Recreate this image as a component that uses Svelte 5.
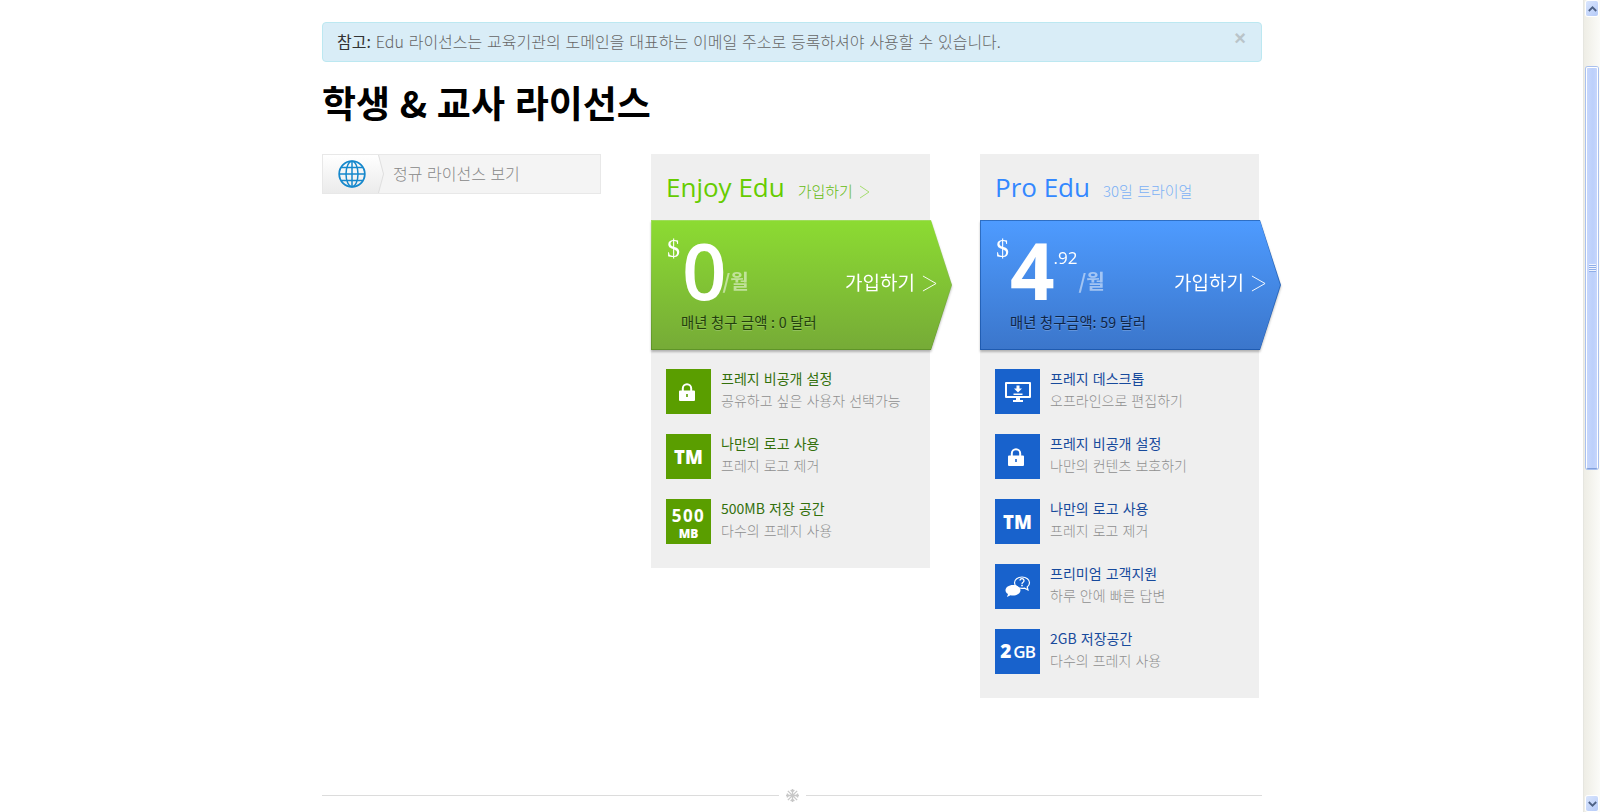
<script>
  const plans = [
    {
      id: 'enjoy',
      name: 'Enjoy Edu',
      tagline: '가입하기',
      taglineArrow: true,
      whole: '0',
      cents: '',
      billing: '매년 청구 금액 : 0 달러',
      features: [
        { icon: 'lock', title: '프레지 비공개 설정', sub: '공유하고 싶은 사용자 선택가능' },
        { icon: 'tm', title: '나만의 로고 사용', sub: '프레지 로고 제거' },
        { icon: '500', title: '500MB 저장 공간', sub: '다수의 프레지 사용' }
      ]
    },
    {
      id: 'pro',
      name: 'Pro Edu',
      tagline: '30일 트라이얼',
      taglineArrow: false,
      whole: '4',
      cents: '.92',
      billing: '매년 청구금액: 59 달러',
      features: [
        { icon: 'desktop', title: '프레지 데스크톱', sub: '오프라인으로 편집하기' },
        { icon: 'lock', title: '프레지 비공개 설정', sub: '나만의 컨텐츠 보호하기' },
        { icon: 'tm', title: '나만의 로고 사용', sub: '프레지 로고 제거' },
        { icon: 'chat', title: '프리미엄 고객지원', sub: '하루 안에 빠른 답변' },
        { icon: '2gb', title: '2GB 저장공간', sub: '다수의 프레지 사용' }
      ]
    }
  ];
</script>

{#snippet featureIcon(kind)}
  {#if kind === 'lock'}
    <svg class="lock" width="16" height="18" viewBox="0 0 16 18">
      <path d="M3.800 8V5.500a4.200 4.200 0 0 1 8.400 0V8" fill="none" stroke="#fff" stroke-width="2" />
      <path fill="#fff" fill-rule="evenodd" d="M1 7.500h14a1 1 0 0 1 1 1V17a1 1 0 0 1-1 1H1a1 1 0 0 1-1-1V8.500a1 1 0 0 1 1-1zM7.200 11v3h1.600v-3z" />
    </svg>
  {:else if kind === 'tm'}
    <span class="tm">TM</span>
  {:else if kind === '500'}
    <span class="stack"><span class="n500">500</span><span class="mb">MB</span></span>
  {:else if kind === '2gb'}
    <span class="two"><b>2</b><span>GB</span></span>
  {:else if kind === 'desktop'}
    <svg width="26" height="22" viewBox="0 0 26 22">
      <path fill="#fff" fill-rule="evenodd" d="M1 1h24a1 1 0 0 1 1 1v14a1 1 0 0 1-1 1H1a1 1 0 0 1-1-1V2a1 1 0 0 1 1-1zM2 3v12h22V3z" />
      <path fill="#fff" d="M11.500 4.500h3v3h2.500l-4 4-4-4h2.500zM8.500 12.500h9V14h-9zM11 17h4v2h3v2H8v-2h3z" />
    </svg>
  {:else if kind === 'chat'}
    <svg width="26" height="22" viewBox="0 0 26 22">
      <path fill="#fff" d="M8 9c4.200 0 7.500 2.300 7.500 5.200S12.200 19.500 8 19.500c-.9 0-1.700-.1-2.500-.3L2 21l1-3.100C1.200 17 .500 15.700.500 14.200.500 11.300 3.800 9 8 9z" />
      <path fill="none" stroke="#fff" stroke-width="1.200" d="M17 1c4.300 0 7.500 2.500 7.500 5.700 0 1.700-.9 3.200-2.300 4.200l.8 2.900-3.600-1.700c-.8.200-1.600.3-2.400.3-4.300 0-7.500-2.500-7.500-5.700S12.700 1 17 1z" />
      <path fill="none" stroke="#fff" stroke-width="1.300" d="M15 4.600a2 2 0 1 1 3.100 1.700c-.8.500-1.100.9-1.100 1.700" />
      <path fill="#fff" d="M16.200 8.800h1.600v1.500h-1.600z" />
    </svg>
  {/if}
{/snippet}

<div class="page">
  <main>
    <div class="alert">
      <p><strong>참고:</strong> Edu 라이선스는 교육기관의 도메인을 대표하는 이메일 주소로 등록하셔야 사용할 수 있습니다.</p>
      <span class="close">×</span>
    </div>

    <h1>학생 &amp; 교사 라이선스</h1>

    <div class="columns">
      <aside class="regular">
        <span class="globe-wrap">
          <span class="globe">
            <svg width="28" height="28" viewBox="0 0 28 28" fill="none" stroke="#1688cc" stroke-width="1.500">
              <circle cx="14" cy="14" r="12.800" stroke-width="1.800" />
              <ellipse cx="14" cy="14" rx="6" ry="12.800" />
              <path d="M14 1v26M1.200 14h25.600M3.200 7.500h21.600M3.200 20.500h21.600" />
            </svg>
          </span>
        </span>
        <span class="regular-label">정규 라이선스 보기</span>
      </aside>

      {#each plans as plan (plan.id)}
        <section class="plan {plan.id}">
          <header>
            <h2>{plan.name}</h2>
            <span class="tagline">{plan.tagline}{#if plan.taglineArrow}<svg class="chev small" viewBox="0 0 11 14"><path d="M1 1l9 6-9 6" /></svg>{/if}</span>
          </header>

          <div class="ribbon-wrap">
            <div class="ribbon-edge">
              <div class="ribbon">
                <div class="price-row">
                  <span class="dollar">$</span>
                  <span class="whole">{plan.whole}</span>
                  {#if plan.cents}<span class="cents">{plan.cents}</span>{/if}
                  <span class="per">/월</span>
                  <span class="cta">가입하기<svg class="chev" viewBox="0 0 16 18"><path d="M1 1l14 8-14 8" /></svg></span>
                </div>
                <div class="billing">{plan.billing}</div>
              </div>
            </div>
          </div>

          <ul>
            {#each plan.features as f}
              <li>
                <span class="icon">{@render featureIcon(f.icon)}</span>
                <div class="feature-text">
                  <div class="feature-title">{f.title}</div>
                  <div class="feature-sub">{f.sub}</div>
                </div>
              </li>
            {/each}
          </ul>
        </section>
      {/each}
    </div>

    <div class="divider">
      <span class="rule"></span>
      <svg width="13" height="13" viewBox="0 0 14 14" stroke="#c8c8c8" stroke-width="1.400" fill="none">
        <path d="M7 0v14M0 7h14M2 2l10 10M12 2L2 12M5 1l2 2 2-2M5 13l2-2 2 2M1 5l2 2-2 2M13 5l-2 2 2 2" />
      </svg>
      <span class="rule"></span>
    </div>
  </main>

  <div class="scrollbar">
    <span class="sb-btn">
      <svg width="9" height="6" viewBox="0 0 9 6"><path d="M.8 5L4.500 1.300 8.200 5" fill="none" stroke="#4d6185" stroke-width="1.800" /></svg>
    </span>
    <span class="sb-track-top"></span>
    <span class="sb-thumb">
      <span class="grip"></span>
    </span>
    <span class="sb-track-bottom"></span>
    <span class="sb-btn">
      <svg width="9" height="6" viewBox="0 0 9 6"><path d="M.8 1L4.500 4.700 8.200 1" fill="none" stroke="#4d6185" stroke-width="1.800" /></svg>
    </span>
  </div>
</div>

<style>
  :global(body) {
    margin: 0;
    background: #fff;
    font-family: "Noto Sans CJK KR", "Open Sans", sans-serif;
  }

  .page {
    display: flex;
    height: 812px;
    overflow: hidden;
  }

  main {
    flex: 1;
    padding: 22px 0 0 322px;
    min-width: 0;
  }

  /* notice */
  .alert {
    box-sizing: border-box;
    width: 940px;
    height: 40px;
    display: flex;
    justify-content: space-between;
    padding: 0 15px 0 14px;
    background: #d9edf7;
    border: 1px solid #bce8f1;
    border-radius: 4px;
    color: #666;
    font-size: 16px;
    font-weight: 300;
    line-height: 37px;
    word-spacing: 1.300px;
  }

  .alert p {
    margin: 0;
    white-space: nowrap;
  }

  .alert strong {
    color: #333;
    font-weight: 400;
  }

  .close {
    color: #b9c4c9;
    font-family: "Liberation Sans", sans-serif;
    font-size: 20px;
    font-weight: 700;
    line-height: 30px;
  }

  h1 {
    margin: 10px 0 18px;
    height: 64px;
    line-height: 60px;
    color: #000;
    font-size: 37px;
    font-weight: 700;
    word-spacing: 1.300px;
    white-space: nowrap;
  }

  .columns {
    display: grid;
    grid-template-columns: repeat(3, 279px);
    column-gap: 50px;
    align-items: start;
    height: 634px;
  }

  /* left link */
  .regular {
    box-sizing: border-box;
    height: 40px;
    display: flex;
    align-items: center;
    background: #f4f4f4;
    border: 1px solid #e8e8e8;
    font-weight: 300;
  }

  .globe-wrap {
    flex: none;
    filter: drop-shadow(1px 0 0 #dedede);
  }

  .globe {
    width: 60px;
    height: 38px;
    padding-left: 15px;
    box-sizing: border-box;
    display: flex;
    align-items: center;
    background: linear-gradient(#fff, #ebebeb);
    clip-path: polygon(0 0, 55px 0, 60px 50%, 55px 100%, 0 100%);
  }

  .regular-label {
    margin: -2px 0 0 10px;
    color: #888;
    font-size: 16px;
    word-spacing: 1px;
  }

  /* plan columns */
  .plan {
    background: #efefef;
  }

  .plan header {
    height: 65px;
    padding-left: 15px;
    box-sizing: border-box;
    display: flex;
    align-items: baseline;
    gap: 13px;
    line-height: 66px;
    margin-bottom: 1px;
    background: #efefef;
  }

  .plan h2 {
    margin: 0;
    font-family: "Open Sans", sans-serif;
    font-size: 26px;
    font-weight: 400;
  }

  .tagline {
    margin-top: -1px;
    font-size: 15px;
    font-weight: 300;
    word-spacing: 1px;
  }

  .enjoy h2 { color: #66cc00; }
  .enjoy .tagline { color: #66bb11; }
  .pro h2 { color: #3388ff; }
  .pro .tagline { color: #7cb1f5; }

  .chev {
    width: 15px;
    height: 17px;
    margin-left: 7px;
    fill: none;
    stroke: #fff;
    stroke-width: 1;
    vertical-align: -2px;
  }

  .chev.small {
    width: 11px;
    height: 14px;
    margin-left: 6px;
    stroke: #a6dd70;
  }

  /* price ribbon */
  .ribbon-wrap {
    width: 301px;
    height: 130px;
    filter: drop-shadow(0 2px 1px rgba(0, 0, 0, 0.25));
  }

  .ribbon-edge {
    height: 100%;
    padding: 1px;
    box-sizing: border-box;
    clip-path: polygon(0 0, 280px 0, 301px 50%, 280px 100%, 0 100%);
  }

  .enjoy .ribbon-edge { background: linear-gradient(#9fdc5c, #5f9428); }
  .pro .ribbon-edge { background: linear-gradient(#2f6fc4, #1f5bb0); }

  .ribbon {
    height: 100%;
    box-sizing: border-box;
    padding: 0 0 0 15px;
    clip-path: polygon(0 0, 279px 0, 299px 50%, 279px 100%, 0 100%);
  }

  .enjoy .ribbon { background: linear-gradient(#8cdb32, #76ab37); }
  .pro .ribbon { background: linear-gradient(#4e9bff, #3b76cb); }

  .price-row {
    position: relative;
    height: 90px;
    display: flex;
    color: #fff;
  }

  .dollar {
    margin-top: 13px;
    font-family: "Liberation Serif", serif;
    font-size: 26px;
    line-height: 30px;
  }

  .whole {
    margin: 9px 0 0 2px;
    font-family: "Open Sans", sans-serif;
    font-size: 78px;
    font-weight: 600;
    line-height: 80px;
    letter-spacing: -1px;
  }

  .pro .whole {
    margin-left: 1px;
    font-weight: 700;
  }

  .cents {
    margin-top: 25px;
    font-family: "Open Sans", sans-serif;
    font-size: 17px;
    line-height: 24px;
  }

  .per {
    margin: 46px 0 0 -3px;
    color: rgba(255, 255, 255, 0.5);
    font-size: 20px;
    font-weight: 700;
    line-height: 28px;
  }

  .pro .per {
    margin-left: 1px;
  }

  .cta {
    position: absolute;
    left: 178px;
    top: 47px;
    font-size: 19px;
    font-weight: 400;
    line-height: 28px;
    white-space: nowrap;
  }

  .billing {
    padding-left: 14px;
    font-size: 14.300px;
    line-height: 22px;
    font-weight: 400;
    word-spacing: .5px;
    text-shadow: 0 1px 0 rgba(255, 255, 255, 0.2);
  }

  .enjoy .billing { color: #23400c; }
  .pro .billing { color: #0e2548; }

  /* feature list */
  ul {
    list-style: none;
    margin: 0;
    padding: 19px 15px 24px;
    display: flex;
    flex-direction: column;
    gap: 20px;
  }

  li {
    display: flex;
    gap: 10px;
    height: 45px;
  }

  .icon {
    flex: none;
    width: 45px;
    height: 45px;
    display: flex;
    align-items: center;
    justify-content: center;
    color: #fff;
    font-family: "Open Sans", sans-serif;
    font-weight: 800;
  }

  .enjoy .icon { background: #5a9e00; }
  .pro .icon { background: #1862cc; }

  .lock {
    margin-right: 3px;
  }

  .tm {
    font-size: 18.500px;
    letter-spacing: 0;
  }

  .stack {
    display: flex;
    flex-direction: column;
    align-items: center;
    padding-top: 3px;
  }

  .n500 {
    font-size: 17px;
    font-weight: 700;
    line-height: 17px;
    letter-spacing: 1.500px;
  }

  .mb {
    margin-top: 4px;
    font-size: 12px;
    line-height: 12px;
  }

  .two {
    display: flex;
    align-items: baseline;
    gap: 2px;
    line-height: 24px;
  }

  .two b {
    font-size: 19px;
    font-weight: 800;
  }

  .two span {
    font-size: 17px;
    font-weight: 600;
    letter-spacing: -1px;
  }

  .feature-text {
    margin-top: -1px;
    white-space: nowrap;
  }

  .feature-title {
    font-size: 14px;
    line-height: 20px;
    font-weight: 400;
    word-spacing: 1px;
  }

  .enjoy .feature-title { color: #33700c; }
  .pro .feature-title { color: #174a9c; }

  .feature-sub {
    margin-top: 2px;
    color: #8f8f8f;
    font-size: 14px;
    font-weight: 300;
    line-height: 20px;
    word-spacing: 1px;
  }

  /* bottom rule */
  .divider {
    display: flex;
    align-items: center;
    width: 940px;
    height: 14px;
    gap: 7px;
  }

  .rule {
    flex: 1;
    height: 1px;
    background: #dcdcdc;
  }

  /* fake xp scrollbar */
  .scrollbar {
    flex: none;
    width: 17px;
    box-sizing: border-box;
    padding: 1px 2px 1px 2px;
    display: flex;
    flex-direction: column;
    align-items: stretch;
    background: linear-gradient(90deg, #eeede5, #fbfbf8);
    border-left: 1px solid #e6e6e0;
  }

  .sb-btn {
    flex: none;
    height: 15px;
    display: flex;
    align-items: center;
    justify-content: center;
    background: linear-gradient(135deg, #d9e5fd, #b6cbf8);
    border-radius: 2px;
    box-shadow: 0 0 0 1px #fff;
  }

  .sb-track-top {
    flex: none;
    height: 51px;
  }

  .sb-thumb {
    flex: none;
    height: 402px;
    box-sizing: border-box;
    display: flex;
    align-items: center;
    justify-content: center;
    background: linear-gradient(90deg, #c6d6fc, #bcd0fb 60%, #c6d6fc);
    border: 1px solid #fff;
    border-bottom: 1px solid #7f9fdc;
    border-radius: 2px;
    box-shadow: 0 0 0 1px #a9c0ee;
  }

  .grip {
    width: 7px;
    height: 8px;
    background: repeating-linear-gradient(#eef3fe 0 1px, #8faee8 1px 2px);
  }

  .sb-track-bottom {
    flex: 1;
  }
</style>
